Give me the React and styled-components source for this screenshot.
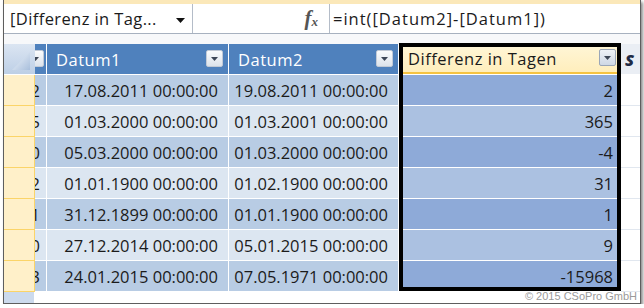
import React from 'react'
import styled, { createGlobalStyle } from 'styled-components'

const GlobalStyle = createGlobalStyle`
  html, body {
    margin: 0;
    padding: 0;
    background: #fff;
  }
  body {
    font-family: 'Open Sans', 'Noto Sans', sans-serif;
  }
`

const rows = [
  { id: '2', d1: '17.08.2011 00:00:00', d2: '19.08.2011 00:00:00', diff: '2' },
  { id: '5', d1: '01.03.2000 00:00:00', d2: '01.03.2001 00:00:00', diff: '365' },
  { id: '0', d1: '05.03.2000 00:00:00', d2: '01.03.2000 00:00:00', diff: '-4' },
  { id: '2', d1: '01.01.1900 00:00:00', d2: '01.02.1900 00:00:00', diff: '31' },
  { id: '1', d1: '31.12.1899 00:00:00', d2: '01.01.1900 00:00:00', diff: '1' },
  { id: '0', d1: '27.12.2014 00:00:00', d2: '05.01.2015 00:00:00', diff: '9' },
  { id: '3', d1: '24.01.2015 00:00:00', d2: '07.05.1971 00:00:00', diff: '-15968' },
]

const Arrow = () => (
  <svg width="9" height="5" viewBox="0 0 9 5">
    <polygon points="0,0 9,0 4.5,5" fill="#111" />
  </svg>
)

const SmallArrow = () => (
  <svg width="7" height="4" viewBox="0 0 7 4">
    <polygon points="0,0 7,0 3.5,4" fill="#3e4757" />
  </svg>
)

const DropButton = ({ selected }) => (
  <Drop selected={selected}>
    <SmallArrow />
  </Drop>
)

const App = () => {
  return (
    <>
      <GlobalStyle />
      <Frame>
        <TopBand />
        <FormulaBar>
          <NameBox>
            <span>[Differenz in Tag...</span>
            <Arrow />
          </NameBox>
          <FxArea>
            <Fx>
              f<sub>x</sub>
            </Fx>
          </FxArea>
          <FormulaInput>=int([Datum2]-[Datum1])</FormulaInput>
        </FormulaBar>
        <Gap />
        <Grid>
          <RowHeadColumn>
            <Corner>
              <svg width="31" height="30" viewBox="0 0 31 30">
                <defs>
                  <linearGradient id="tri" x1="0" y1="0" x2="1" y2="1">
                    <stop offset="0" stopColor="#f4f8fc" />
                    <stop offset="1" stopColor="#a9bfdc" />
                  </linearGradient>
                </defs>
                <polygon points="26,8 26,26 8,26" fill="url(#tri)" />
              </svg>
            </Corner>
            {rows.map((r, i) => (
              <RowHead key={i} />
            ))}
            <RowHeadFoot />
          </RowHeadColumn>

          <Column width={12}>
            <Header clip>
              <DropButton />
            </Header>
            {rows.map((r, i) => (
              <Cell key={i} odd={i % 2 === 0} clip>
                {r.id}
              </Cell>
            ))}
            <Foot />
          </Column>

          <Column width={182}>
            <Header>
              <span>Datum1</span>
              <DropButton />
            </Header>
            {rows.map((r, i) => (
              <Cell key={i} odd={i % 2 === 0}>
                {r.d1}
              </Cell>
            ))}
            <Foot />
          </Column>

          <Column width={170}>
            <Header>
              <span>Datum2</span>
              <DropButton />
            </Header>
            {rows.map((r, i) => (
              <Cell key={i} odd={i % 2 === 0}>
                {r.d2}
              </Cell>
            ))}
            <Foot />
          </Column>

          <SelectedColumn width={222}>
            <Header selected>
              <span>Differenz in Tagen</span>
              <DropButton selected />
            </Header>
            {rows.map((r, i) => (
              <Cell key={i} odd={i % 2 === 0} selected>
                {r.diff}
              </Cell>
            ))}
            <Foot />
          </SelectedColumn>

          <EmptyColumn>
            <EmptyHeader>S</EmptyHeader>
            {rows.map((r, i) => (
              <EmptyCell key={i} />
            ))}
          </EmptyColumn>
        </Grid>
        <Copyright>© 2015 CSoPro GmbH</Copyright>
      </Frame>
    </>
  )
}

export default App

const Frame = styled.div`
  position: relative;
  margin-left: 3px;
  width: 636px;
  height: 303px;
  border: 1px solid #5e5e5e;
  border-top: none;
  box-shadow: 2px 2px 3px rgba(0, 0, 0, 0.45);
  background: #fff;
  overflow: hidden;
`
const TopBand = styled.div`
  height: 4px;
  background: #fbe8b9;
`
const FormulaBar = styled.div`
  display: flex;
  height: 29px;
  border-bottom: 1px solid #a7b1bf;
  background: #fff;
  color: #1b1b1b;
  font-size: 16.5px;
  letter-spacing: 0.4px;
`
const NameBox = styled.div`
  border-right: 1px solid #b4bcc8;
  display: flex;
  align-items: center;
  justify-content: space-between;
  padding: 0 7px 0 6px;
  box-sizing: border-box;
  width: 189px;
  svg {
    margin-top: 3px;
  }
`
const FxArea = styled.div`
  width: 137px;
  box-sizing: border-box;
  border-right: 1px solid #b4bcc8;
  display: flex;
  align-items: center;
  justify-content: flex-end;
  padding-right: 11px;
`
const Fx = styled.span`
  font-family: 'Liberation Serif', serif;
  font-style: italic;
  font-weight: bold;
  font-size: 21px;
  color: #555;
  letter-spacing: 0;
  sub {
    font-size: 13px;
    vertical-align: -1px;
  }
`
const FormulaInput = styled.div`
  flex: 1;
  display: flex;
  align-items: center;
  padding-left: 3px;
  letter-spacing: 1px;
`
const Gap = styled.div`
  height: 10px;
  background: #f7f8fa;
`
const Grid = styled.div`
  display: flex;
  height: 259px;
  font-size: 16.5px;
`
const RowHeadColumn = styled.div`
  width: 31px;
  display: flex;
  flex-direction: column;
`
const Corner = styled.div`
  height: 30px;
  border-bottom: 1px solid #fff;
  background: linear-gradient(#dbe5f2, #bdcfe6);
  svg {
    display: block;
  }
`
const RowHead = styled.div`
  height: 30px;
  background: #fff0c9;
  border-bottom: 1px solid #fbd468;
  border-right: 1px solid #fbd468;
  box-sizing: content-box;
`
const RowHeadFoot = styled.div`
  flex: 1;
  background: #ccdaed;
  border-right: 1px solid #fff;
`
const Column = styled.div`
  width: ${({ width }) => width}px;
  box-sizing: border-box;
  border-right: 1px solid #fff;
  display: flex;
  flex-direction: column;
`
const SelectedColumn = styled(Column)`
  position: relative;
  border-right: none;
  &::after {
    content: '';
    position: absolute;
    top: -1px;
    left: 0;
    right: 0;
    height: 248px;
    border: 4px solid #000;
    box-sizing: border-box;
  }
`
const Header = styled.div`
  height: ${({ selected }) => (selected ? '28px' : '30px')};
  border-bottom: ${({ selected }) =>
    selected ? '2px solid #f5c342' : 'none'};
  margin-bottom: 1px;
  background: ${({ selected }) =>
    selected ? 'linear-gradient(#fff6d8, #ffeebc)' : '#4f81bd'};
  color: ${({ selected }) => (selected ? '#1b1b1b' : '#fff')};
  display: flex;
  align-items: center;
  justify-content: ${({ clip }) => (clip ? 'flex-end' : 'space-between')};
  padding: ${({ clip }) => (clip ? '0 2px 0 0' : '0 5px 0 9px')};
  overflow: hidden;
  span {
    white-space: nowrap;
    letter-spacing: 0.5px;
  }
`
const Drop = styled.div`
  flex: none;
  width: 17px;
  height: 17px;
  box-sizing: border-box;
  border: 1px solid ${({ selected }) => (selected ? '#9aa6b8' : '#c2cad6')};
  border-radius: 2px;
  background: ${({ selected }) =>
    selected
      ? 'linear-gradient(#eef2f7, #cfd8e5)'
      : 'linear-gradient(#fbfcfd, #dde3eb)'};
  display: flex;
  align-items: center;
  justify-content: center;
  margin-top: -1px;
`
const Cell = styled.div`
  height: 30px;
  border-bottom: 1px solid #fff;
  background: ${({ odd, selected }) =>
    selected ? (odd ? '#8eaad8' : '#abc1e1') : odd ? '#b8cce4' : '#dce6f1'};
  color: #1b1b1b;
  display: flex;
  align-items: center;
  justify-content: flex-end;
  padding-right: ${({ clip, selected }) =>
    clip ? '6px' : selected ? '8px' : '10px'};
  overflow: hidden;
  white-space: nowrap;
`
const Foot = styled.div`
  flex: 1;
  background: #fff;
`
const EmptyColumn = styled.div`
  flex: 1;
  display: flex;
  flex-direction: column;
  overflow: hidden;
`
const EmptyHeader = styled.div`
  height: 30px;
  margin-bottom: 1px;
  background: #eaeef4;
  display: flex;
  align-items: center;
  padding-left: 4px;
  font-weight: 800;
  font-style: italic;
  color: #1f2a44;
`
const EmptyCell = styled.div`
  height: 30px;
  border-bottom: 1px solid #e1e7ef;
  background: #fff;
`
const Copyright = styled.div`
  position: absolute;
  right: 3px;
  bottom: 1px;
  font-family: 'Liberation Sans', Arial, sans-serif;
  font-size: 11px;
  color: #9a9a9a;
`
